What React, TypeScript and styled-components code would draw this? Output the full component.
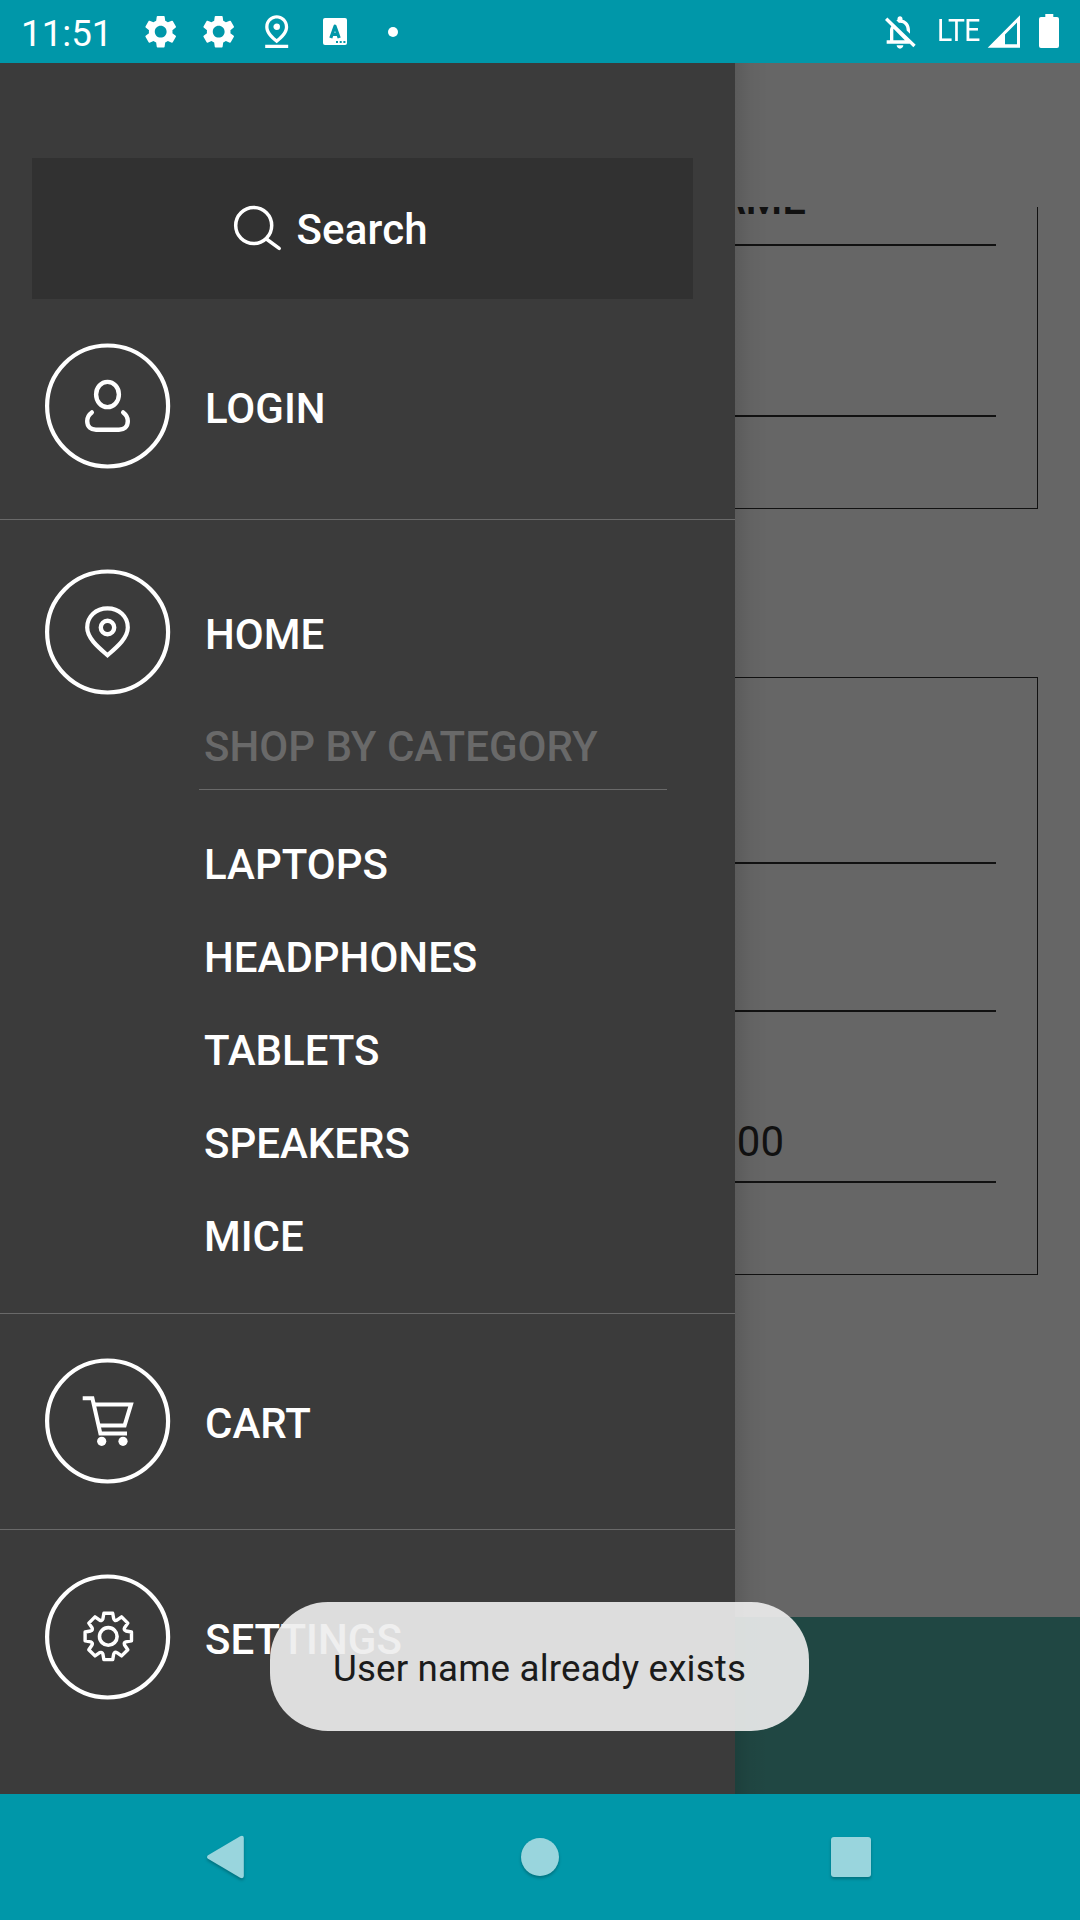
import React from "react";
import styled, { createGlobalStyle } from "styled-components";
import { MdSettings, MdOutlinePinDrop } from "react-icons/md";

const GlobalStyle = createGlobalStyle`
  *, *::before, *::after { box-sizing: border-box; }
  body { margin: 0; background: #666; font-family: Roboto, "Noto Sans", sans-serif; }
`;

const Screen = styled.div`
  width: 1080px;
  height: 1920px;
  display: flex;
  flex-direction: column;
  overflow: hidden;
`;

/* ---------- status bar ---------- */

const StatusBar = styled.header`
  flex: 0 0 63px;
  display: flex;
  align-items: center;
  padding: 0 21px;
  background: #0097a9;
  color: #fff;
`;

const Clock = styled.time`
  width: 111px;
  padding-top: 4px;
  font-size: 36.75px;
  line-height: 43px;
`;

const StatusSlot = styled.span`
  width: 58px;
  height: 63px;
  display: flex;
  align-items: center;
  justify-content: center;
`;

const StatusDot = styled.span`
  width: 10px;
  height: 10px;
  border-radius: 50%;
  background: #fff;
`;

const StatusRight = styled.div`
  margin-left: auto;
  display: flex;
  align-items: center;
`;

const Network = styled.span`
  width: 50px;
  margin-left: 17px;
  padding-bottom: 3px;
  font-size: 32px;
  line-height: 38px;
  letter-spacing: -0.6px;
  transform: scaleX(0.885);
  transform-origin: left center;
`;

const Battery = styled.svg`
  display: block;
  margin: 0 0 1px 18px;
`;

/* ---------- page under the drawer ---------- */

const Stage = styled.main`
  flex: 1;
  position: relative;
  display: flex;
  overflow: hidden;
`;

const Page = styled.div`
  flex: 1;
  display: flex;
  flex-direction: column;
  background: #666;
  color: #111;
`;

const PageHeader = styled.div`
  flex: 0 0 144px;
`;

const FormScroll = styled.div`
  flex: 1;
  overflow: hidden;
  padding: 0 42px;
`;

const Panel = styled.section<{ $height: number; $open?: boolean }>`
  height: ${(p) => p.$height}px;
  padding: 0 41px;
  border: 1px solid #111;
  border-top-width: ${(p) => (p.$open ? 0 : 1)}px;
  margin-bottom: 168px;
`;

const Field = styled.div<{ $height: number }>`
  height: ${(p) => p.$height}px;
  display: flex;
  align-items: flex-end;
  border-bottom: 2px solid #111;
  font-size: 42px;
  line-height: 49px;
`;

const FieldLabel = styled.span`
  width: 722px;
  padding-bottom: 20px;
  text-align: right;
  font-weight: 500;
`;

const FieldValue = styled.span`
  width: 700px;
  padding-bottom: 15px;
  text-align: right;
`;

const PageFooter = styled.div`
  flex: 0 0 177px;
  background: #204743;
`;

/* ---------- drawer ---------- */

const Drawer = styled.nav`
  position: absolute;
  inset: 0 auto 0 0;
  width: 735px;
  display: flex;
  flex-direction: column;
  background: #3b3b3b;
  color: #fff;
  font-size: 42px;
  font-weight: 500;
  line-height: 49px;

  &::after {
    content: "";
    position: absolute;
    left: 100%;
    top: 0;
    bottom: 0;
    width: 34px;
    background: linear-gradient(90deg, rgba(0, 0, 0, 0.11), rgba(0, 0, 0, 0.03) 45%, transparent);
  }
`;

const SearchBox = styled.div`
  flex: 0 0 141px;
  margin: 95px 42px 0 32px;
  padding: 0 0 0 201px;
  display: flex;
  align-items: center;
  background: #313131;
`;

const SearchGlyph = styled.svg`
  margin-bottom: 2px;
`;

const SearchLabel = styled.span`
  margin-left: 13.5px;
  padding-top: 2px;
  letter-spacing: 0.15px;
`;

const Section = styled.section<{ $height: number; $top: number }>`
  flex: 0 0 ${(p) => p.$height}px;
  padding-top: ${(p) => p.$top}px;
  border-bottom: 1px solid #696969;

  &:last-child {
    border-bottom: 0;
  }
`;

const MenuRow = styled.div`
  height: 126px;
  padding-left: 45px;
  display: flex;
  align-items: center;
`;

const MenuLabel = styled.span`
  margin-left: 34px;
  padding-top: 4px;
`;

const Subheading = styled.h2`
  width: 468px;
  height: 69px;
  margin: 26px 0 28px 199px;
  padding-left: 5px;
  border-bottom: 1px solid #696969;
  color: #696969;
  font-size: 42px;
  font-weight: 500;
  line-height: 52px;
`;

const CategoryList = styled.ul`
  margin: 0;
  padding: 0 0 0 204px;
  list-style: none;
`;

const Category = styled.li`
  height: 93px;
  line-height: 93px;
`;

/* ---------- toast and navigation ---------- */

const Toast = styled.div`
  position: absolute;
  left: 270px;
  top: 1539px;
  width: 539px;
  height: 129px;
  border-radius: 58px;
  display: flex;
  align-items: center;
  justify-content: center;
  padding-top: 3px;
  background: rgba(237, 237, 237, 0.908);
  color: #1b1b1b;
  font-size: 36.75px;
  line-height: 43px;
  letter-spacing: 0.16px;
  white-space: nowrap;
`;

const NavBar = styled.footer`
  flex: 0 0 126px;
  display: flex;
  justify-content: space-between;
  align-items: center;
  padding: 0 199px;
  background: #0097a9;
`;

const NavIcon = styled.svg`
  display: block;
  filter: drop-shadow(0 2px 1.5px rgba(0, 0, 0, 0.25));
`;

const Ring = ({ children }: { children: React.ReactNode }) => (
  <svg width="126" height="126" viewBox="0 0 126 126" fill="none" stroke="#fff" strokeWidth="4">
    <circle cx="62.6" cy="63" r="60.5" strokeWidth="4.2" />
    {children}
  </svg>
);

const UserIcon = () => (
  <Ring>
    <ellipse cx="62.5" cy="51.5" rx="11.4" ry="12.6" strokeWidth="4.4" />
    <path
      d="M46.8 69.4C43.3 72 42.2 75 42.2 78C42.2 84 46 86.7 51 86.7H74C79 86.7 82.8 84 82.8 78C82.8 75 81.7 72 78.2 69.4"
      strokeWidth="4.4"
      strokeLinecap="round"
    />
  </Ring>
);

const PinIcon = () => (
  <Ring>
    <path d="M62.5 86.2C53 78 42.2 69 42.2 58.5C42.2 47.5 51 39.4 62.5 39.4S82.8 47.5 82.8 58.5C82.8 69 72 78 62.5 86.2Z" strokeWidth="4.2" />
    <circle cx="62.5" cy="58.5" r="6.7" strokeWidth="4.4" />
  </Ring>
);

const CartIcon = () => (
  <Ring>
    <path d="M37.7 40.2H47.4L55.4 75.6H82" />
    <path d="M49 46.4H86L79.6 67.6H54" />
    <g fill="#fff" stroke="none">
      <circle cx="56.7" cy="83.3" r="4.6" />
      <circle cx="78" cy="83.3" r="4.6" />
    </g>
  </Ring>
);

const gearPath = () => {
  const cx = 63.3;
  const cy = 62.4;
  const turn = (x: number, y: number, i: number) => {
    const a = (i * Math.PI) / 4;
    const px = cx + x * Math.cos(a) - y * Math.sin(a);
    const py = cy + x * Math.sin(a) + y * Math.cos(a);
    return `${px.toFixed(2)} ${py.toFixed(2)}`;
  };
  let d = "";
  for (let i = 0; i < 8; i++) {
    d += `${i ? "L" : "M"}${turn(-5.4, -17.6, i)}L${turn(-4.4, -23.2, i)}L${turn(4.4, -23.2, i)}L${turn(5.4, -17.6, i)}`;
    d += `Q${turn(6.2, -15.2, i)} ${turn(-5.4, -17.6, i + 1)}`;
  }
  return d + "Z";
};

const GearIcon = () => (
  <Ring>
    <path d={gearPath()} strokeWidth="3.4" strokeLinejoin="round" />
    <circle cx="63.3" cy="62.4" r="8.8" strokeWidth="3.6" />
  </Ring>
);

const SearchIcon = () => (
  <SearchGlyph width="50" height="46" viewBox="0 0 50 46" fill="none" stroke="#fff" strokeWidth="3.5">
    <circle cx="20.7" cy="20.5" r="18" />
    <path d="M33.4 34L46.2 43.4" strokeLinecap="round" />
  </SearchGlyph>
);

const KeyboardIcon = () => (
  <svg width="24" height="27" viewBox="0 0 24 27">
    <rect width="24" height="27" rx="2" fill="#fff" />
    <path d="M7.8 20L12 8.2L16.2 20M9 16.4H15" fill="none" stroke="#0097a9" strokeWidth="3.2" strokeLinejoin="round" />
    <path d="M13 23h2v2h-2zM16.7 23h2v2h-2zM20.4 23h2v2h-2z" fill="#0097a9" />
  </svg>
);

const BellOffIcon = () => (
  <svg width="40" height="40" viewBox="0 0 24 24" fill="#fff">
    <path d="M12 22c1.1 0 2-.9 2-2h-4c0 1.1.9 2 2 2zm0-15.5c2.49 0 4 2.02 4 4.5v.1l2 2V11c0-3.07-1.63-5.64-4.5-6.32V4c0-.83-.67-1.5-1.5-1.5s-1.5.67-1.5 1.5v.68c-.24.06-.47.15-.69.23l1.64 1.64c.18-.02.36-.05.55-.05zM4.4 3.35L3 4.76l3.81 3.81C6.29 9.3 6 10 6 11v6H4v2h13.9l2.1 2.1 1.4-1.41L4.4 3.35zM14.5 17H8v-6c0-.3 0-.6.1-.9L14.9 17z" />
  </svg>
);

const SignalIcon = () => (
  <svg width="34" height="34" viewBox="0 0 34 34">
    <path d="M.7 32.7L33 .3V32.7ZM18 29.3H30V7.5L18 19.5Z" fill="#fff" fillRule="evenodd" />
  </svg>
);

const BatteryIcon = () => (
  <Battery width="20" height="34" viewBox="0 0 20 34">
    <path d="M6.3 0H14.3V3H18Q20 3 20 5V32Q20 34 18 34H2Q0 34 0 32V5Q0 3 2 3H6.3Z" fill="#fff" />
  </Battery>
);

const categories = ["LAPTOPS", "HEADPHONES", "TABLETS", "SPEAKERS", "MICE"];

export default function App() {
  return (
    <Screen>
      <GlobalStyle />
      <StatusBar>
        <Clock>11:51</Clock>
        <StatusSlot><MdSettings size={39.4} /></StatusSlot>
        <StatusSlot><MdSettings size={39.4} /></StatusSlot>
        <StatusSlot><MdOutlinePinDrop size={39.4} /></StatusSlot>
        <StatusSlot><KeyboardIcon /></StatusSlot>
        <StatusSlot><StatusDot /></StatusSlot>
        <StatusRight>
          <BellOffIcon />
          <Network>LTE</Network>
          <SignalIcon />
          <BatteryIcon />
        </StatusRight>
      </StatusBar>

      <Stage>
        <Page>
          <PageHeader />
          <FormScroll>
            <Panel $height={302} $open>
              <Field $height={39}><FieldLabel>USERNAME</FieldLabel></Field>
              <Field $height={171} />
            </Panel>
            <Panel $height={598}>
              <Field $height={186} />
              <Field $height={148} />
              <Field $height={171}><FieldValue>00</FieldValue></Field>
            </Panel>
          </FormScroll>
          <PageFooter />
        </Page>

        <Drawer>
          <SearchBox>
            <SearchIcon />
            <SearchLabel>Search</SearchLabel>
          </SearchBox>
          <Section $height={221} $top={44}>
            <MenuRow><UserIcon /><MenuLabel>LOGIN</MenuLabel></MenuRow>
          </Section>
          <Section $height={794} $top={49}>
            <MenuRow><PinIcon /><MenuLabel>HOME</MenuLabel></MenuRow>
            <Subheading>SHOP BY CATEGORY</Subheading>
            <CategoryList>
              {categories.map((name) => <Category key={name}>{name}</Category>)}
            </CategoryList>
          </Section>
          <Section $height={216} $top={44}>
            <MenuRow><CartIcon /><MenuLabel>CART</MenuLabel></MenuRow>
          </Section>
          <Section $height={264} $top={44}>
            <MenuRow><GearIcon /><MenuLabel>SETTINGS</MenuLabel></MenuRow>
          </Section>
        </Drawer>

        <Toast role="status">User name already exists</Toast>
      </Stage>

      <NavBar>
        <NavIcon width="52" height="52" viewBox="0 0 52 52">
          <path d="M9 24.2L41.2 5.2Q44.8 4 44.8 7V45Q44.8 48 41.2 46.8L9 27.8Q7 26 9 24.2Z" fill="#99d5dd" />
        </NavIcon>
        <NavIcon width="52" height="52" viewBox="0 0 52 52">
          <circle cx="26" cy="26" r="19" fill="#99d5dd" />
        </NavIcon>
        <NavIcon width="52" height="52" viewBox="0 0 52 52">
          <rect x="2" y="6" width="40" height="40" rx="3" fill="#99d5dd" />
        </NavIcon>
      </NavBar>
    </Screen>
  );
}
